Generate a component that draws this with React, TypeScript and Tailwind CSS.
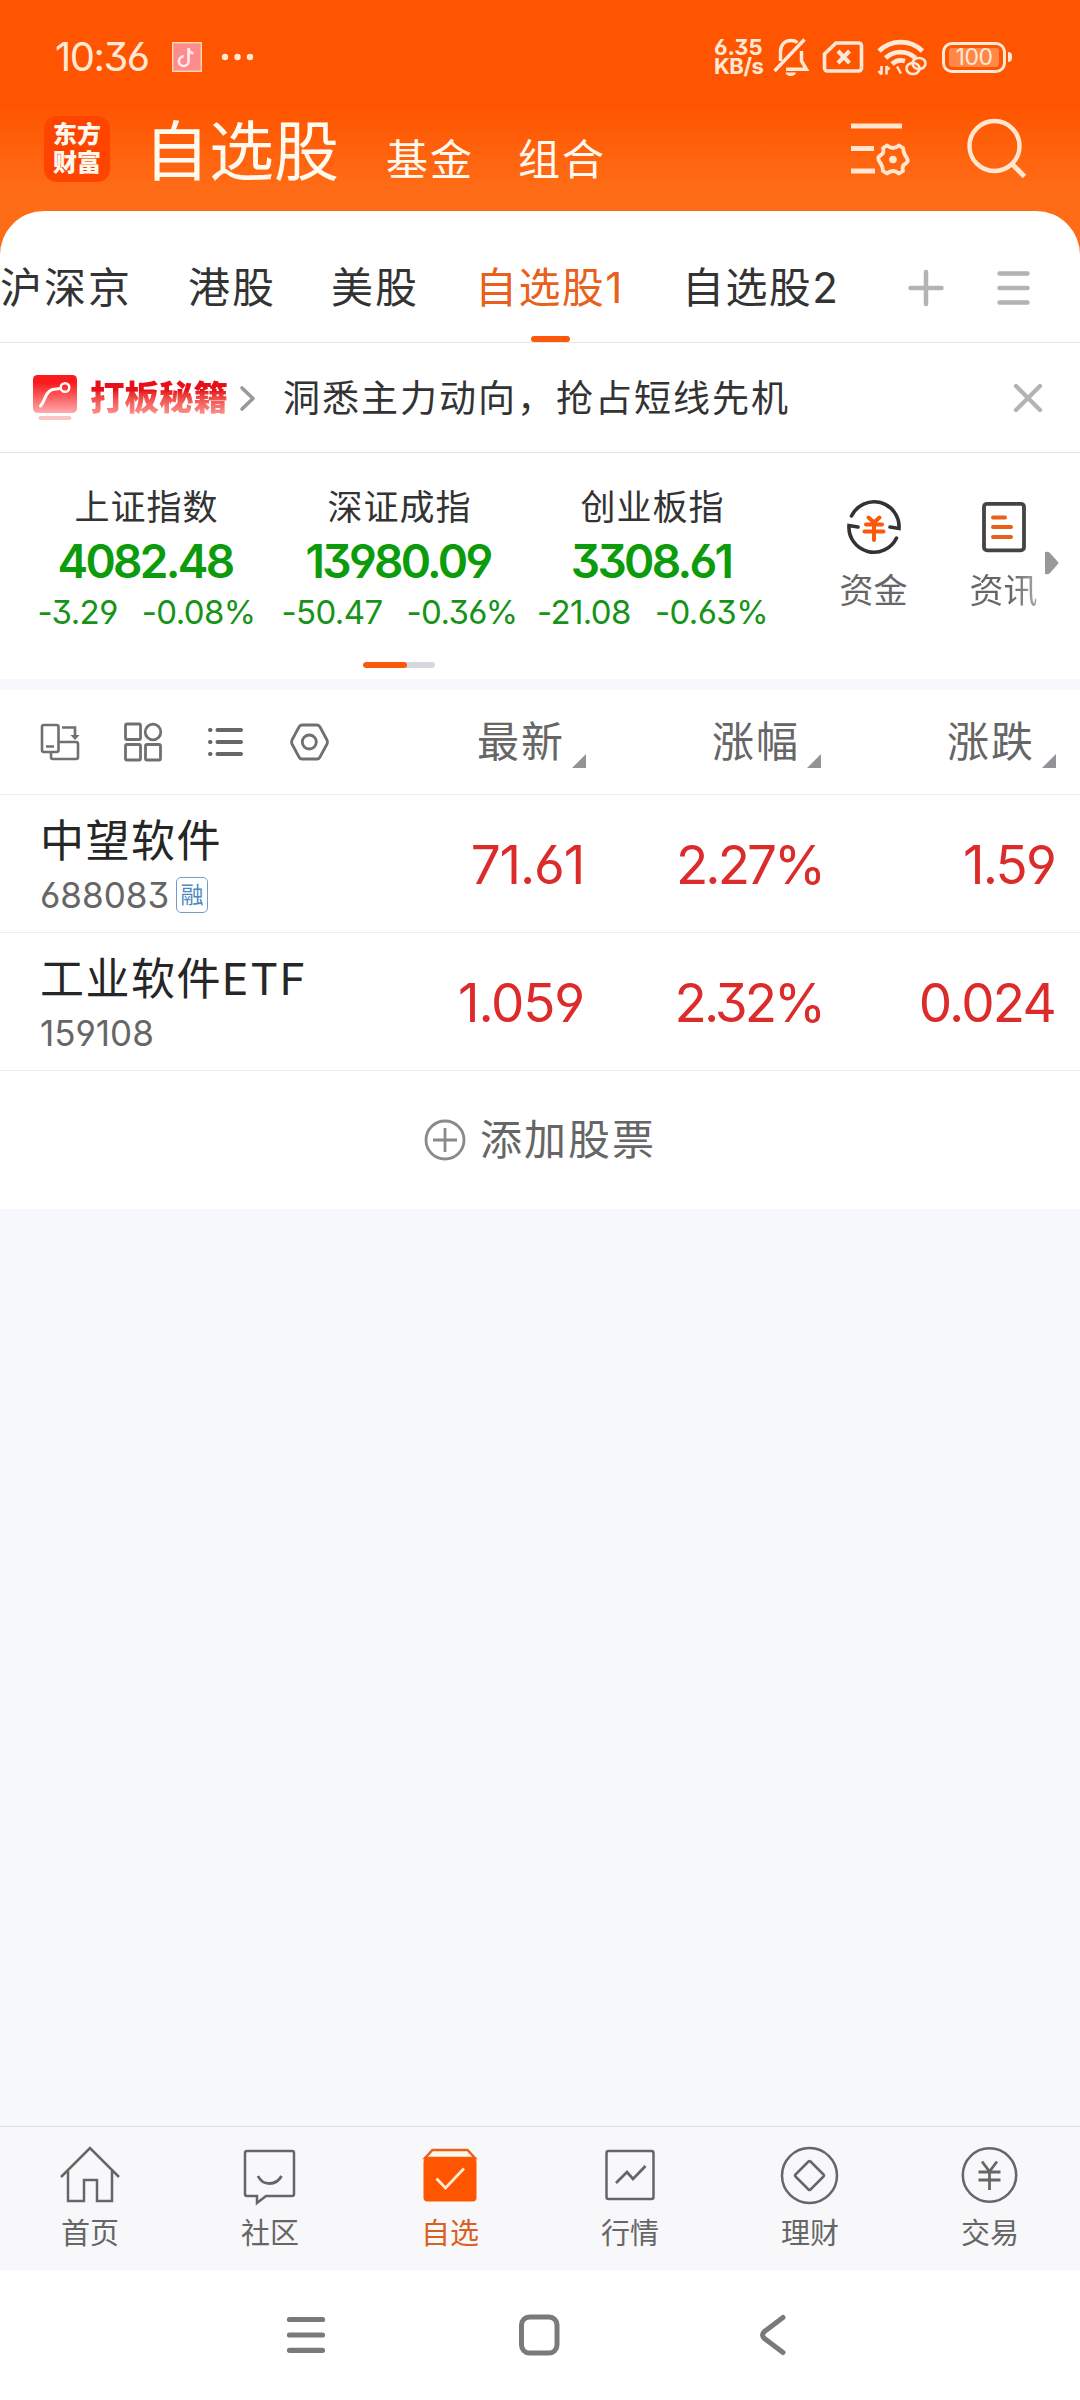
import React from 'react';

interface IndexQuote {
  name: string;
  price: string;
  change: string;
  percent: string;
}

interface Stock {
  name: string;
  code: string;
  margin?: boolean;
  price: string;
  percent: string;
  change: string;
}

const indices: IndexQuote[] = [
  { name: '上证指数', price: '4082.48', change: '-3.29', percent: '-0.08%' },
  { name: '深证成指', price: '13980.09', change: '-50.47', percent: '-0.36%' },
  { name: '创业板指', price: '3308.61', change: '-21.08', percent: '-0.63%' },
];

const stocks: Stock[] = [
  { name: '中望软件', code: '688083', margin: true, price: '71.61', percent: '2.27%', change: '1.59' },
  { name: '工业软件ETF', code: '159108', price: '1.059', percent: '2.32%', change: '0.024' },
];

const columns = ['最新', '涨幅', '涨跌'];

function StatusBar() {
  return (
    <div className="flex h-[106px] items-center pl-[55px] pr-[68px] pt-2 text-[#ffe8d6]">
      <span className="w-[117px] text-[40px] leading-none tracking-[-1.5px]">10:36</span>
      <svg width="30" height="30" viewBox="0 0 30 30">
        <rect x="0.7" y="0.7" width="28.6" height="28.6" fill="#ff8c8c" stroke="#ffd9ae" strokeWidth="1.4" />
        <path d="M16.5 6v13.2a4.8 4.8 0 1 1-4.8-4.8M16.5 6.5c.4 2.8 2.2 4.6 5 4.8" fill="none" stroke="#ffe9ee" strokeWidth="2.6" />
      </svg>
      <svg className="ml-[19px]" width="34" height="8" viewBox="0 0 34 8" fill="currentColor">
        <circle cx="4" cy="4" r="3.2" />
        <circle cx="16.5" cy="4" r="3.2" />
        <circle cx="29" cy="4" r="3.2" />
      </svg>

      <div className="ml-auto w-[59px] text-[22px] font-bold leading-[19px]">
        <div>6.35</div>
        <div className="tracking-[-0.5px]">KB/s</div>
      </div>
      {/* Muted bell */}
      <svg className="shrink-0" width="36" height="40" viewBox="0 0 36 40" fill="none" stroke="currentColor" strokeWidth="3.4">
        <path d="M7.5 24V14.5C7.5 7.5 12 3.5 18 3.5c2.6 0 4.8.7 6.5 2M28.5 14v10l5 8.3H13" />
        <path d="M1.5 34L31.5 2.5" />
        <path d="M12.5 35.5h10.5a5.3 4 0 0 1-10.5 0z" fill="currentColor" stroke="none" />
      </svg>
      {/* No SIM */}
      <svg className="ml-[13px] shrink-0" width="42" height="34" viewBox="0 0 42 34" fill="none" stroke="currentColor" strokeWidth="3.6">
        <path d="M14 3h22.5a3 3 0 0 1 3 3v22a3 3 0 0 1-3 3H5.5a3 3 0 0 1-3-3V14z" />
        <path d="M16 11l11.5 12M27.500 11L16 23" strokeWidth="4" />
      </svg>
      {/* Wifi with link badge */}
      <svg className="ml-[13px] shrink-0" width="50" height="38" viewBox="0 0 50 38" fill="none" stroke="currentColor">
        <path d="M2 13a31 31 0 0 1 43.5 0" strokeWidth="4.8" />
        <path d="M8.5 20a22 22 0 0 1 30 0" strokeWidth="4.8" />
        <path d="M15 26a13.5 13.5 0 0 1 13-3" strokeWidth="4.8" />
        <path d="M4.5 28v8.5M9.5 28v8.5M1.5 33l3 3.500M9.5 28.5l3 3M20 28.5l4 7" strokeWidth="2.5" />
        <ellipse cx="36" cy="30.5" rx="6.5" ry="5.5" strokeWidth="2.6" />
        <ellipse cx="42" cy="25.5" rx="6.5" ry="5.5" strokeWidth="2.6" />
      </svg>
      {/* Battery */}
      <div className="ml-[15px] flex h-[31px] w-[64px] shrink-0 items-center justify-center rounded-[10px] border-[3px] border-current">
        <span className="flex h-[19px] w-[50px] items-center justify-center rounded-[3px] bg-[#ff8748] text-[23px] leading-none tracking-[-0.5px]">
          100
        </span>
      </div>
      <div className="ml-[2px] h-[10px] w-1 shrink-0 rounded-r-sm bg-current" />
    </div>
  );
}

function TitleBar() {
  return (
    <div className="flex h-[105px] items-center pl-11 pr-[52px] text-[#fffaf0]">
      <div className="mt-[-19px] flex h-[66px] w-[66px] flex-col items-center justify-center rounded-[13px] bg-[#ff4400] text-[24px] font-black leading-[28px]">
        <span>东方</span>
        <span>财富</span>
      </div>
      <div className="ml-[34px] flex items-baseline pb-[15px]">
        <span className="text-[65px] leading-none">自选股</span>
        <span className="ml-[47px] text-[42px] leading-none tracking-[2px]">基金</span>
        <span className="ml-[44px] text-[42px] leading-none tracking-[2px]">组合</span>
      </div>
      <svg className="mb-[22px] ml-auto" width="62" height="58" viewBox="0 0 62 58" fill="none" stroke="#ffe6cf" strokeWidth="4.8">
        <path d="M1 7h51M1 29.5h23M1 52h24" />
        <path
          d="M37 26.5Q40 29 43 29T49 26.500L53 29Q53.500 34 55 36T57.500 40.500T55 45T53 52L49 54.500Q46 52 43 52T37 54.500L33 52Q32.500 47 31 45T28.500 40.500T31 36T33 29z"
          strokeWidth="3.8"
          strokeLinejoin="round"
        />
        <circle cx="43" cy="40.5" r="3.8" fill="#ffe6cf" stroke="none" />
      </svg>
      <svg className="mb-[22px] ml-[54px]" width="62" height="62" viewBox="0 0 62 62" fill="none" stroke="#ffe6cf" strokeWidth="4.4">
        <circle cx="28.5" cy="29" r="25" />
        <path d="M45 46l13.5 13.5" strokeWidth="5" />
      </svg>
    </div>
  );
}

function GroupTabs() {
  return (
    <div className="flex h-[132px] items-center border-b border-[#e4e4e4] pt-[22px] text-[42px] leading-none tracking-[2px] text-[#333]">
      <span className="w-[188px]">沪深京</span>
      <span className="w-[143px]">港股</span>
      <span className="w-[144px]">美股</span>
      <div className="relative flex h-full w-[207px] items-center tracking-[1.4px] text-[#e9601c]">
        <span>自选股1</span>
        <div className="absolute bottom-0 left-[56px] h-[6px] w-[39px] rounded-full bg-[#fb580a]" />
      </div>
      <span className="tracking-[1.4px]">自选股2</span>
      <svg className="ml-auto" width="38" height="38" viewBox="0 0 38 38" stroke="#b3b3b3" strokeWidth="4.5" strokeLinecap="round">
        <path d="M19 3v32M3.5 19h31" />
      </svg>
      <svg className="ml-[50px] mr-[48px]" width="37" height="38" viewBox="0 0 37 38" stroke="#b3b3b3" strokeWidth="4.5" strokeLinecap="round">
        <path d="M4.5 4.5h28M4.5 19h28M4.5 33.5h28" />
      </svg>
    </div>
  );
}

function Promo() {
  return (
    <div className="flex h-[110px] items-center border-b border-[#e4e4e4] pl-[33px] pr-[36px]">
      <svg width="44" height="46" viewBox="0 0 44 46">
        <defs>
          <linearGradient id="promo" x1="0" y1="0" x2="0" y2="1">
            <stop offset="0.2" stopColor="#fb1a1c" />
            <stop offset="1" stopColor="#ffaaac" />
          </linearGradient>
        </defs>
        <rect width="44" height="38" rx="4.5" fill="url(#promo)" />
        <path d="M7.5 31c5-5 4-14 12-16.5l8-1" fill="none" stroke="#fff" strokeWidth="3" strokeLinecap="round" />
        <circle cx="32" cy="12.5" r="4.3" fill="none" stroke="#fff" strokeWidth="2.4" />
        <rect x="5.5" y="41" width="33" height="4" rx="2" fill="#f9c4c6" />
      </svg>
      <span className="ml-[13px] bg-gradient-to-b from-[#e60f1a] from-30% to-[#ff9a9c] bg-clip-text text-[34.5px] font-black leading-[38px] text-transparent">
        打板秘籍
      </span>
      <svg className="ml-[11px]" width="18" height="28" viewBox="0 0 18 28" fill="none" stroke="#999" strokeWidth="3.6" strokeLinecap="round" strokeLinejoin="round">
        <path d="M3 4l11 10.5L3 25" />
      </svg>
      <span className="ml-[26px] pt-[2px] text-[37px] leading-none tracking-[2px] text-[#333]">洞悉主力动向，抢占短线先机</span>
      <svg className="ml-auto" width="32" height="32" viewBox="0 0 32 32" stroke="#b3b3b3" strokeWidth="4.2" strokeLinecap="round">
        <path d="M4 4l24 24M28 4L4 28" />
      </svg>
    </div>
  );
}

function Indices() {
  return (
    <div className="h-[226px] bg-white">
      <div className="flex h-[209px] pl-5">
        {indices.map((item) => (
          <div key={item.name} className="flex w-[253px] flex-col items-center pt-[34px]">
            <div className="text-[35px] leading-[40px] tracking-[1px] text-[#333]">{item.name}</div>
            <div className="mt-[6px] pr-[3px] text-[46px] font-[560] leading-[56px] tracking-[-2.7px] text-[#0b9b0b]">{item.price}</div>
            <div className="mt-[3px] flex gap-6 whitespace-nowrap text-[33px] leading-[40px] tracking-[-0.6px] text-[#179317]">
              <span>{item.change}</span>
              <span>{item.percent}</span>
            </div>
          </div>
        ))}
        <div className="flex w-[189px] flex-col items-center pt-[46px]">
          <svg width="56" height="56" viewBox="0 0 56 56" fill="none" stroke="#333" strokeWidth="3.6" strokeLinecap="round">
            <path d="M5.5 17A25 25 0 0 1 53 29.5l-9-1.5" />
            <path d="M50.5 39A25 25 0 0 1 3 26.5l9 1.5" />
            <path d="M22.5 18.5l5.5 5 5.5-5M20 25.5h16M18.5 32.5h19M28 24v17" stroke="#fb580a" strokeWidth="4" />
          </svg>
          <span className="mt-[16px] text-[34px] leading-[40px] text-[#666]">资金</span>
        </div>
        <div className="flex w-[71px] flex-col items-center pt-[46px]">
          <svg width="46" height="56" viewBox="0 0 46 56" fill="none" strokeWidth="3.8">
            <rect x="3" y="4.8" width="40" height="46.5" rx="3" stroke="#444" />
            <path d="M12 18.5h12M12 28h18M12 38h18" stroke="#e9601c" strokeWidth="4" strokeLinecap="round" />
          </svg>
          <span className="mt-[16px] whitespace-nowrap bg-gradient-to-r from-[#666] from-60% to-[#aaa] bg-clip-text text-[34px] leading-[40px] text-transparent">
            资讯
          </span>
        </div>
        <svg className="ml-[6px] mt-[98px]" width="14" height="24" viewBox="0 0 14 24" fill="#999">
          <path d="M0 1q3-1 5 1l8 9q1 1 0 2l-8 9q-2 2-5 1z" />
        </svg>
      </div>
      <div className="ml-[363px] h-[6px] w-[72px] overflow-hidden rounded-full bg-[#d5d7dc]">
        <div className="h-full w-[44px] rounded-full bg-[#f95909]" />
      </div>
    </div>
  );
}

function TableHeader() {
  return (
    <div className="flex h-[105px] items-center border-b border-[#ececec] pl-10">
      <svg width="40" height="40" viewBox="0 0 40 40" fill="none" stroke="#707070" strokeWidth="2.6">
        <rect x="2" y="3" width="16.5" height="27" rx="2" />
        <path d="M6 24.5h8M19 20h17a2 2 0 0 1 2 2v13a2 2 0 0 1-2 2H13a2 2 0 0 1-2-2v-5M22 5.5h13v10" />
        <path d="M30.5 13h9L35 18z" fill="#707070" stroke="none" />
      </svg>
      <svg className="ml-[43px]" width="40" height="40" viewBox="0 0 40 40" fill="none" stroke="#707070" strokeWidth="2.8">
        <rect x="2.5" y="2" width="15" height="15.5" rx="1.5" />
        <circle cx="30" cy="10" r="7.8" />
        <rect x="2.5" y="22.5" width="15" height="15.5" rx="1.5" />
        <rect x="22.5" y="22.5" width="15" height="15.5" rx="1.5" />
      </svg>
      <svg className="ml-[43px]" width="40" height="40" viewBox="0 0 40 40" stroke="#666" strokeWidth="4" strokeLinecap="round">
        <path d="M4 8h.5M4 20h.5M4 32h.5M11.5 8H35M11.5 20H35M11.5 32H35" />
      </svg>
      <svg className="ml-[42px]" width="42" height="40" viewBox="0 0 42 40" fill="none" stroke="#707070" strokeWidth="2.8">
        <path d="M11 5q1-2 3-2h15q2 0 3 2l7 13q1 2 0 4l-7 13q-1 2-3 2H14q-2 0-3-2L4 22q-1-2 0-4z" />
        <circle cx="21.3" cy="20" r="7" />
      </svg>
      <div className="ml-auto flex">
        {columns.map((label) => (
          <div key={label} className="flex w-[235px] items-end justify-end pr-6">
            <span className="text-[42px] leading-[56px] tracking-[2px] text-[#666]">{label}</span>
            <svg className="mb-[2px] ml-[7px]" width="14" height="14" viewBox="0 0 14 14">
              <path d="M14 0v14H0z" fill="#929297" />
            </svg>
          </div>
        ))}
      </div>
    </div>
  );
}

function StockRow({ stock }: { stock: Stock }) {
  return (
    <div className="flex h-[138px] items-center border-b border-[#ececec] pl-10">
      <div className="flex flex-col pt-px">
        <span className="text-[44px] leading-[56px] tracking-[1.5px] text-[#262626]">{stock.name}</span>
        <div className="mt-[6px] flex h-10 items-center">
          <span className="text-[35px] leading-none text-[#666]">{stock.code}</span>
          {stock.margin && (
            <span className="ml-[7px] flex h-[36px] w-[32px] items-center justify-center rounded-[5px] border-[1.5px] border-[#6d9fcb] text-[23px] leading-none text-[#4d88bf]">
              融
            </span>
          )}
        </div>
      </div>
      <div className="ml-auto flex pt-1 text-[53px] leading-none text-[#dc2b2b]">
        <span className="w-[235px] pr-[26px] text-right tracking-[-1.2px]">{stock.price}</span>
        <span className="w-[235px] pr-[22px] text-right tracking-[-3px]">{stock.percent}</span>
        <span className="w-[235px] pr-[25px] text-right tracking-[-1.8px]">{stock.change}</span>
      </div>
    </div>
  );
}

const navItems = [
  {
    label: '首页',
    icon: (
      <>
        <path d="M3 33L32 4l29 29" />
        <path d="M10 27v30h16V36h13v21h15V27" />
      </>
    ),
  },
  {
    label: '社区',
    icon: (
      <>
        <path d="M9 7h45a2 2 0 0 1 2 2v41a2 2 0 0 1-2 2H28l-9 7v-7H9a2 2 0 0 1-2-2V9a2 2 0 0 1 2-2z" />
        <path d="M20 32q3.5 7.5 11.5 7.5T43.5 32" strokeWidth="2.8" />
      </>
    ),
  },
  {
    label: '自选',
    active: true,
    icon: (
      <>
        <path d="M7 14l7.5-8h35l7.5 8z" fill="#fff4e6" stroke="#e9601c" strokeWidth="2.4" />
        <rect x="5.5" y="14" width="53" height="43.5" rx="4" fill="#ff5500" stroke="none" />
        <path d="M18.5 34.5l9 9.5 18.5-19.5" stroke="#ffeccf" strokeWidth="2.8" />
      </>
    ),
  },
  {
    label: '行情',
    icon: (
      <>
        <rect x="8.5" y="7" width="47" height="48" rx="2" />
        <path d="M18 39l11-11 6 7 12.5-13" strokeWidth="2.8" />
      </>
    ),
  },
  {
    label: '理财',
    icon: (
      <>
        <circle cx="31.5" cy="31.5" r="27.5" />
        <path d="M30.5 17.5q1-1 2 0l13 13q1 1 0 2l-13 13q-1 1-2 0l-13-13q-1-1 0-2z" />
      </>
    ),
  },
  {
    label: '交易',
    icon: (
      <>
        <circle cx="31.5" cy="31" r="26.7" />
        <path d="M24 17.5l7.5 10 7.5-10M20.5 28h22M20.5 36h22M31.5 28v18" strokeWidth="2.8" />
      </>
    ),
  },
];

function BottomNav() {
  return (
    <nav className="flex h-[144px] border-t border-[#dedee0] bg-[#f8f8fb]">
      {navItems.map((item) => (
        <div
          key={item.label}
          className={
            item.active
              ? 'flex flex-1 flex-col items-center pt-[17px] text-[#d9601f]'
              : 'flex flex-1 flex-col items-center pt-[17px] text-[#666]'
          }
        >
          <svg width="64" height="64" viewBox="0 0 64 64" fill="none" stroke="#666" strokeWidth="2.5">
            {item.icon}
          </svg>
          <span className="mt-[8px] text-[29px] leading-[36px]">{item.label}</span>
        </div>
      ))}
    </nav>
  );
}

function SystemNav() {
  return (
    <div className="flex h-[130px] items-center bg-white pl-[281px]">
      <svg width="50" height="50" viewBox="0 0 50 50" stroke="#7a7a7a" strokeWidth="5.2" strokeLinecap="round">
        <path d="M8.5 9.5h33M8.5 25h33M8.5 40.3h33" />
      </svg>
      <svg className="ml-[183px]" width="50" height="50" viewBox="0 0 50 50" fill="none" stroke="#7a7a7a" strokeWidth="5">
        <rect x="7.5" y="7" width="35.5" height="36" rx="8" />
      </svg>
      <svg className="ml-[184px]" width="50" height="50" viewBox="0 0 50 50" fill="none" stroke="#7a7a7a" strokeWidth="5" strokeLinecap="round">
        <path d="M35 7.5L16.5 21.5q-4 3.5 0 7L35 42.5" />
      </svg>
    </div>
  );
}

export default function App() {
  return (
    <div className="flex h-[2400px] w-[1080px] flex-col overflow-hidden bg-[#f6f8fb] font-[Inter,'Noto_Sans_CJK_SC',sans-serif] [font-feature-settings:'cv03','cv04','cv09']">
      <header className="bg-[linear-gradient(to_bottom,#ff5500_106px,#ff6c17_190px,#ff6c17_100%)]">
        <StatusBar />
        <TitleBar />
        <div className="rounded-t-[44px] bg-white">
          <GroupTabs />
        </div>
      </header>

      <section className="bg-white">
        <Promo />
        <Indices />
      </section>

      <section className="mt-[11px] bg-white">
        <TableHeader />
        {stocks.map((stock) => (
          <StockRow key={stock.code} stock={stock} />
        ))}
        <div className="flex h-[138px] items-center justify-center text-[#666]">
          <svg width="42" height="42" viewBox="0 0 42 42" fill="none" stroke="#8a8a8c" strokeWidth="2.8">
            <circle cx="21" cy="21" r="19" />
            <path d="M21 9v24M9 21h24" />
          </svg>
          <span className="ml-[14px] text-[42px] leading-none tracking-[2px]">添加股票</span>
        </div>
      </section>

      <div className="mt-auto">
        <BottomNav />
        <SystemNav />
      </div>
    </div>
  );
}
